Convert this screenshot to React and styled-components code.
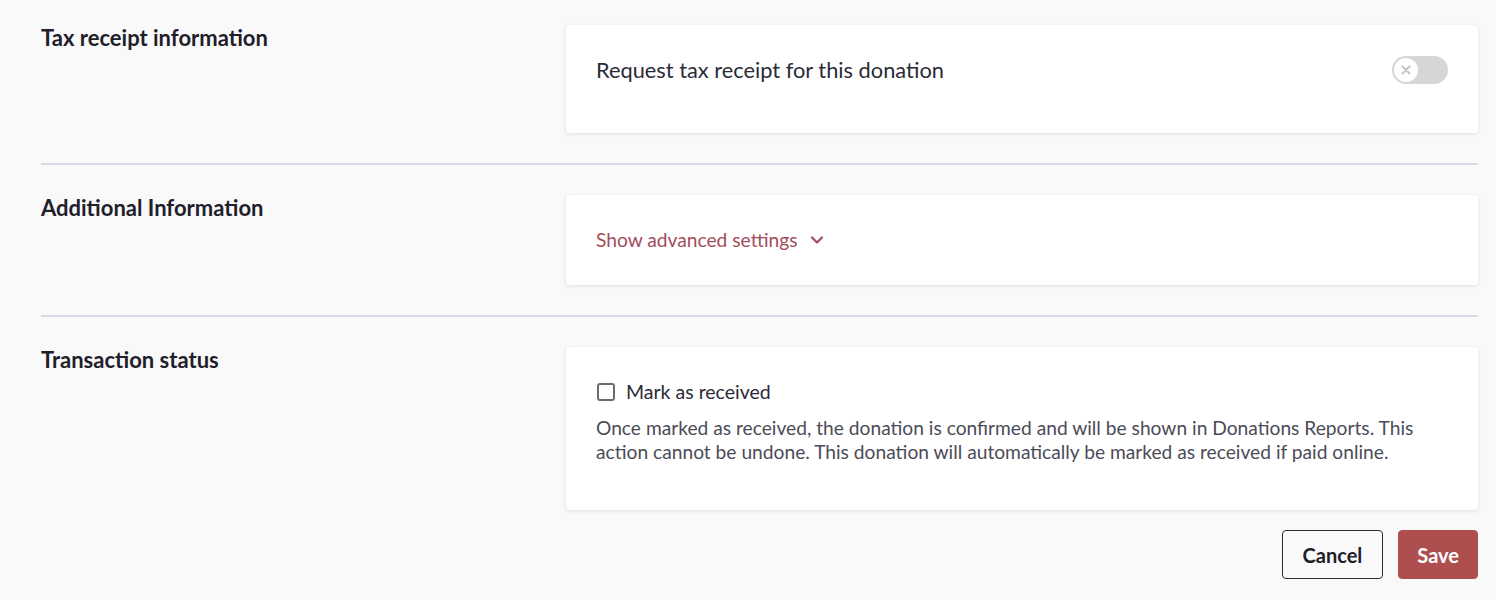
import React, { useState } from "react";
import styled, { createGlobalStyle } from "styled-components";

const GlobalStyle = createGlobalStyle`
  body {
    margin: 0;
    background: #f9f9fa;
    font-family: Lato, "Open Sans", sans-serif;
    color: #1f2029;
  }
`;

const Page = styled.main`
  padding: 25px 18px 20px 41px;
`;

const Section = styled.section`
  display: grid;
  grid-template-columns: 525px 1fr;
  padding: ${(p) => (p.$first ? "0" : "30px")} 0 ${(p) => (p.$last ? "0" : "30px")};
  border-bottom: ${(p) => (p.$last ? "none" : "2px solid #d9dbe4")};
`;

const Label = styled.h2`
  margin: 0;
  font-size: 22px;
  font-weight: 700;
  line-height: 26px;
  color: #1f2029;
`;

const Card = styled.div`
  background: #fff;
  border-radius: 4px;
  box-shadow: 0 1px 4px rgba(30, 32, 60, 0.12);
  padding: ${(p) => p.$pad || "30px"};
  min-height: ${(p) => p.$h || "auto"};
  box-sizing: border-box;
`;

const Row = styled.div`
  display: flex;
  align-items: center;
  justify-content: space-between;
`;

const CardText = styled.span`
  font-size: 21.8px;
  line-height: 30px;
  color: #2a2b36;
`;

const Toggle = styled.button`
  width: 56px;
  height: 28px;
  border: none;
  border-radius: 14px;
  background: #d6d6d6;
  padding: 2px;
  display: flex;
  align-items: center;
  cursor: pointer;
`;

const Knob = styled.span`
  width: 24px;
  height: 24px;
  border-radius: 50%;
  background: #fff;
  display: flex;
  align-items: center;
  justify-content: center;
`;

const LinkButton = styled.button`
  border: none;
  background: none;
  padding: 0;
  font-family: inherit;
  font-size: 19.2px;
  line-height: 30px;
  color: #a24d5c;
  display: flex;
  align-items: center;
  gap: 12px;
  cursor: pointer;
`;

const CheckRow = styled.label`
  display: flex;
  align-items: center;
  gap: 11px;
  font-size: 19.5px;
  color: #2a2b36;
  line-height: 30px;
  cursor: pointer;
`;

const Box = styled.span`
  width: 18px;
  height: 18px;
  box-sizing: border-box;
  border: 2px solid #6c6d74;
  border-radius: 3px;
  margin-left: 1px;
`;

const Help = styled.p`
  margin: 9px 0 0;
  font-size: 19.2px;
  line-height: 24px;
  color: #4b4c57;
`;

const Actions = styled.div`
  display: flex;
  justify-content: flex-end;
  gap: 15px;
  margin-top: 20px;
`;

const Button = styled.button`
  height: 49px;
  padding: 0 ${(p) => (p.$primary ? "18px" : "20px")};
  border-radius: 4px;
  font-family: inherit;
  font-size: 20px;
  font-weight: 700;
  cursor: pointer;
  border: 1px solid ${(p) => (p.$primary ? "#ad4e4f" : "#2a2b36")};
  background: ${(p) => (p.$primary ? "#ad4e4f" : "#fafafa")};
  color: ${(p) => (p.$primary ? "#fff" : "#1f2029")};
`;

export default function App() {
  const [open, setOpen] = useState(false);
  return (
    <>
      <GlobalStyle />
      <Page>
        <Section $first>
          <Label>Tax receipt information</Label>
          <Card $pad="30px 30px" $h="108px">
            <Row>
              <CardText>Request tax receipt for this donation</CardText>
              <Toggle aria-label="toggle">
                <Knob>
                  <svg width="12" height="12" viewBox="0 0 12 12">
                    <path d="M2.5 2.5l7 7M9.5 2.5l-7 7" stroke="#c4c4c4" strokeWidth="2" strokeLinecap="round" />
                  </svg>
                </Knob>
              </Toggle>
            </Row>
          </Card>
        </Section>
        <Section>
          <Label>Additional Information</Label>
          <Card $pad="30px 30px" $h="90px">
            <LinkButton onClick={() => setOpen(!open)}>
              Show advanced settings
              <svg width="14" height="10" viewBox="0 0 14 10">
                <path d="M2 2.5l5 5 5-5" fill="none" stroke="#a24d5c" strokeWidth="2.2" strokeLinecap="round" strokeLinejoin="round" />
              </svg>
            </LinkButton>
          </Card>
        </Section>
        <Section $last>
          <Label>Transaction status</Label>
          <Card $pad="30px 30px 34px" $h="163px">
            <CheckRow>
              <Box />
              Mark as received
            </CheckRow>
            <Help>
              Once marked as received, the donation is confirmed and will be shown in Donations Reports. This action cannot be undone. This donation will automatically be marked as received if paid online.
            </Help>
          </Card>
        </Section>
        <Actions>
          <Button>Cancel</Button>
          <Button $primary>Save</Button>
        </Actions>
      </Page>
    </>
  );
}
